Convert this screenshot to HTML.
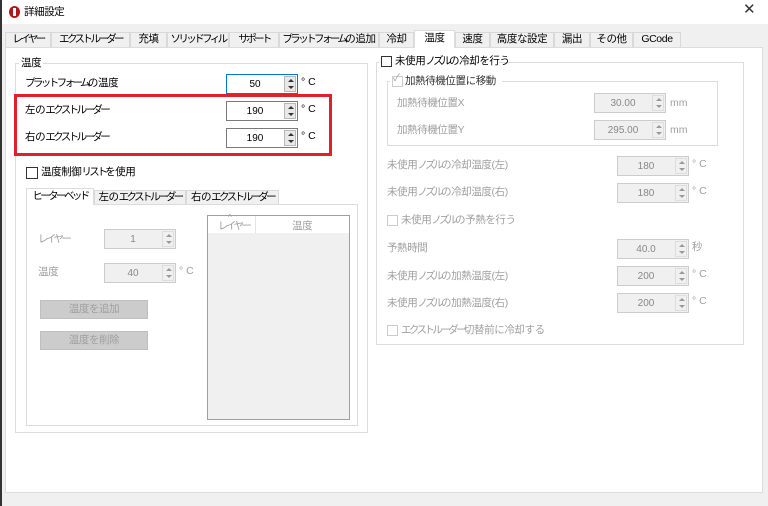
<!DOCTYPE html>
<html><head><meta charset="utf-8"><style>
*{box-sizing:border-box;margin:0;padding:0}
body{width:768px;height:506px;position:relative;overflow:hidden;background:#f0f0f0;font-family:"Liberation Sans","Noto Sans CJK JP",sans-serif;font-size:10.5px;color:#000}
.a{position:absolute;white-space:nowrap}
.t{position:absolute;white-space:nowrap;line-height:14px;letter-spacing:-0.4px}
b{font-weight:normal;letter-spacing:-2.6px}
.dis{color:#a0a0a0}
.tab{position:absolute;top:32px;height:15px;background:#f0f0f0;border:1px solid #d9d9d9;border-bottom:none;text-align:center;line-height:13px;font-size:10.5px;white-space:nowrap;overflow:hidden;letter-spacing:-0.4px}
.sp{position:absolute;width:72px;height:20px;border:1px solid #7a7a7a;background:#fff}
.sp span{position:absolute;left:0;right:14px;top:4px;text-align:center;font-size:10px}
.sp i{position:absolute;right:1px;top:1px;width:12px;height:16px;background:#e8e8e8;border:1px solid #b8b8b8}
.sp i:before{content:"";position:absolute;left:3px;top:2px;border:3px solid transparent;border-bottom:3px solid #333;border-top:none}
.sp i:after{content:"";position:absolute;left:3px;top:9px;border:3px solid transparent;border-top:3px solid #333;border-bottom:none}
.sp.d{background:#f0f0f0;border-color:#ccc}
.sp.d span{color:#888}
.sp.d i{background:#f0f0f0;border-color:#ddd}
.sp.d i:before{border-bottom-color:#999}.sp.d i:after{border-top-color:#999}
.grp{position:absolute;border:1px solid #dcdcdc}
.cb{position:absolute;width:11px;height:11px;border:1px solid #333;background:#fff}
.cb.d{border-color:#ccc}
.btn{position:absolute;width:108px;height:19px;background:#cccccc;border:1px solid #bfbfbf;color:#a0a0a0;text-align:center;line-height:17px;letter-spacing:-0.4px}
</style></head><body>
<div class="a" style="left:0;top:0;width:768px;height:24px;background:#fff"></div>
<div class="a" style="left:0;top:0;width:2px;height:506px;background:#333"></div>
<div class="a" style="left:9px;top:6px;width:11px;height:12px;border-radius:50%;background:#b01818"></div>
<div class="a" style="left:13px;top:8px;width:3px;height:8px;background:#fff"></div>
<div class="t" style="left:24px;top:5px">詳細設定</div>
<div class="t" style="left:743px;top:3px;font-size:15px;color:#333;letter-spacing:0">✕</div>

<div class="a" style="left:5px;top:47px;width:758px;height:446px;background:#fff;border:1px solid #dcdcdc"></div>
<div class="tab" style="left:5px;width:46px"><b>レイヤー</b></div>
<div class="tab" style="left:51px;width:79px"><b>エクストルーダー</b></div>
<div class="tab" style="left:130px;width:37px">充填</div>
<div class="tab" style="left:167px;width:62px"><b>ソリッドフィル</b></div>
<div class="tab" style="left:229px;width:50px"><b>サポート</b></div>
<div class="tab" style="left:279px;width:100px"><b>プラットフォーム</b>の追加</div>
<div class="tab" style="left:379px;width:35px">冷却</div>
<div class="tab" style="left:414px;top:30px;height:18px;width:41px;background:#fff;border-color:#dcdcdc;line-height:14px">温度</div>
<div class="tab" style="left:455px;width:35px">速度</div>
<div class="tab" style="left:490px;width:64px">高度な設定</div>
<div class="tab" style="left:554px;width:36px">漏出</div>
<div class="tab" style="left:590px;width:43px">その他</div>
<div class="tab" style="left:633px;width:48px">GCode</div>

<!-- left group -->
<div class="grp" style="left:15px;top:63px;width:353px;height:370px"></div>
<div class="t" style="left:19px;top:56px;background:#fff;padding:0 2px">温度</div>
<div class="t" style="left:25px;top:76px"><b>プラットフォーム</b>の温度</div>
<div class="sp" style="left:226px;top:74px;border-color:#0078d7"><span>50</span><i></i></div>
<div class="t" style="left:301px;top:75px;letter-spacing:0">° C</div>
<div class="t" style="left:25px;top:103px">左の<b>エクストルーダー</b></div>
<div class="sp" style="left:226px;top:101px"><span>190</span><i></i></div>
<div class="t" style="left:301px;top:102px;letter-spacing:0">° C</div>
<div class="t" style="left:25px;top:130px">右の<b>エクストルーダー</b></div>
<div class="sp" style="left:226px;top:128px"><span>190</span><i></i></div>
<div class="t" style="left:301px;top:129px;letter-spacing:0">° C</div>
<div class="a" style="left:14px;top:94px;width:318px;height:62px;border:3px solid #e0202a"></div>

<div class="cb" style="left:26px;top:167px;width:12px;height:12px"></div>
<div class="t" style="left:41px;top:165px">温度制御<b>リスト</b>を使用</div>
<div class="a" style="left:26px;top:204px;width:332px;height:222px;border:1px solid #dcdcdc;background:#fff"></div>
<div class="tab" style="left:94px;top:190px;width:92px;height:14px">左の<b>エクストルーダー</b></div>
<div class="tab" style="left:186px;top:190px;width:93px;height:14px">右の<b>エクストルーダー</b></div>
<div class="tab" style="left:26px;top:188px;width:68px;height:17px;background:#fff;border-color:#dcdcdc;line-height:15px"><b>ヒーターベッド</b></div>
<div class="t dis" style="left:38px;top:232px"><b>レイヤー</b></div>
<div class="sp d" style="left:104px;top:229px"><span>1</span><i></i></div>
<div class="t dis" style="left:38px;top:265px">温度</div>
<div class="sp d" style="left:104px;top:263px"><span>40</span><i></i></div>
<div class="t dis" style="left:179px;top:264px;letter-spacing:0">° C</div>
<div class="btn" style="left:40px;top:300px">温度を追加</div>
<div class="btn" style="left:40px;top:331px">温度を削除</div>
<div class="a" style="left:207px;top:215px;width:143px;height:205px;border:1px solid #a0a0a0;background:#f0f0f0"></div>
<div class="a" style="left:208px;top:216px;width:141px;height:17px;background:#fff"></div>
<div class="a" style="left:255px;top:216px;width:1px;height:17px;background:#e5e5e5"></div>
<div class="t dis" style="left:218px;top:219px"><b>レイヤー</b></div>
<div class="t dis" style="left:228px;top:211px;font-size:8px">^</div>
<div class="t dis" style="left:292px;top:219px">温度</div>

<!-- right group -->
<div class="grp" style="left:376px;top:62px;width:368px;height:283px"></div>
<div class="a" style="left:379px;top:53px;width:120px;height:16px;background:#fff"></div>
<div class="cb" style="left:381px;top:56px"></div>
<div class="t" style="left:395px;top:54px">未使用<b>ノズル</b>の冷却を行う</div>
<div class="grp" style="left:387px;top:81px;width:331px;height:65px"></div>
<div class="a" style="left:390px;top:73px;width:112px;height:15px;background:#fff"></div>
<div class="cb d" style="left:392px;top:76px"></div>
<div class="t dis" style="left:393px;top:72px;font-size:10px">✓</div>
<div class="t" style="left:405px;top:74px;color:#333">加熱待機位置に移動</div>
<div class="t dis" style="left:397px;top:96px">加熱待機位置X</div>
<div class="sp d" style="left:594px;top:93px"><span>30.00</span><i></i></div>
<div class="t dis" style="left:670px;top:96px;letter-spacing:0">mm</div>
<div class="t dis" style="left:397px;top:123px">加熱待機位置Y</div>
<div class="sp d" style="left:594px;top:120px"><span>295.00</span><i></i></div>
<div class="t dis" style="left:670px;top:123px;letter-spacing:0">mm</div>

<div class="t dis" style="left:387px;top:158px">未使用<b>ノズル</b>の冷却温度(左)</div>
<div class="sp d" style="left:617px;top:156px"><span>180</span><i></i></div>
<div class="t dis" style="left:692px;top:157px;letter-spacing:0">° C</div>
<div class="t dis" style="left:387px;top:185px">未使用<b>ノズル</b>の冷却温度(右)</div>
<div class="sp d" style="left:617px;top:183px"><span>180</span><i></i></div>
<div class="t dis" style="left:692px;top:184px;letter-spacing:0">° C</div>
<div class="cb d" style="left:387px;top:215px"></div>
<div class="t dis" style="left:401px;top:213px">未使用<b>ノズル</b>の予熱を行う</div>
<div class="t dis" style="left:387px;top:241px">予熱時間</div>
<div class="sp d" style="left:617px;top:239px"><span>40.0</span><i></i></div>
<div class="t dis" style="left:692px;top:240px">秒</div>
<div class="t dis" style="left:387px;top:269px">未使用<b>ノズル</b>の加熱温度(左)</div>
<div class="sp d" style="left:617px;top:266px"><span>200</span><i></i></div>
<div class="t dis" style="left:692px;top:267px;letter-spacing:0">° C</div>
<div class="t dis" style="left:387px;top:296px">未使用<b>ノズル</b>の加熱温度(右)</div>
<div class="sp d" style="left:617px;top:293px"><span>200</span><i></i></div>
<div class="t dis" style="left:692px;top:294px;letter-spacing:0">° C</div>
<div class="cb d" style="left:387px;top:325px"></div>
<div class="t dis" style="left:401px;top:323px"><b>エクストルーダー</b>切替前に冷却する</div>
</body></html>
